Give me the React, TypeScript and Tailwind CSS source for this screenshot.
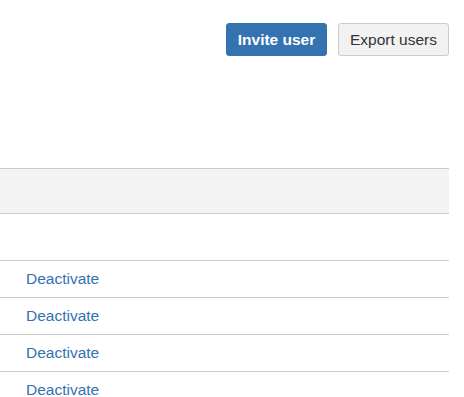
export default function App() {
  const rows = ['Deactivate', 'Deactivate', 'Deactivate', 'Deactivate']

  return (
    <div className="w-[464px] h-[397px] overflow-hidden bg-white font-['Liberation_Sans',Arial,sans-serif] text-[15.5px] text-[#333]">
      <div className="w-[449px]">
        {/* Actions */}
        <div className="flex justify-end gap-[11px] pt-[23px]">
          <button className="h-[33px] w-[101px] rounded-[3px] bg-[#3572b0] border border-[#3572b0] text-white font-bold text-[15.5px]">
            Invite user
          </button>
          <button className="h-[33px] w-[111px] rounded-[3px] bg-[#f2f2f2] border border-[#ccc] text-[#333] text-[15.5px]">
            Export users
          </button>
        </div>

        {/* Table */}
        <div className="mt-[112px]">
          <div className="h-[46px] bg-[#f4f4f4] border-y border-[#ccc]" />
          <div className="h-[47px] border-b border-[#ccc]" />
          {rows.map((label, i) => (
            <div key={i} className="h-[37px] border-b border-[#ccc] flex items-center pl-[26px]">
              <a href="#" className="text-[#3572b0]">
                {label}
              </a>
            </div>
          ))}
        </div>
      </div>
    </div>
  )
}
